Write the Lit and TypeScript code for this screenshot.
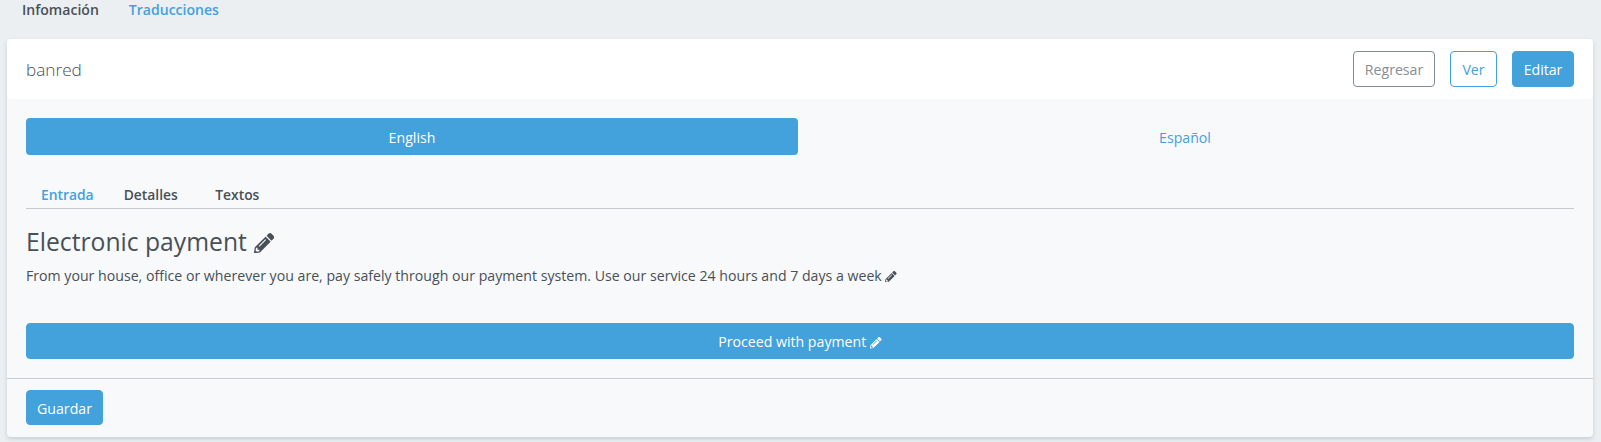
import { LitElement, html, css } from "lit";
import { customElement, state } from "lit/decorators.js";
import { classMap } from "lit/directives/class-map.js";

@customElement("edit-pencil")
class EditPencil extends LitElement {
  static styles = css`
    :host { display: inline-block; width: 0.82em; height: 0.82em; }
    svg { display: block; width: 100%; height: 100%; fill: currentColor; }
  `;
  render() {
    return html`<svg viewBox="0 0 512 512" aria-hidden="true"><path d="M497.9 142.1l-46.1 46.1c-4.7 4.7-12.3 4.7-17 0l-111-111c-4.7-4.7-4.7-12.3 0-17l46.1-46.1c18.7-18.7 49.1-18.7 67.9 0l60.1 60.1c18.8 18.7 18.8 49.1 0 67.9zM284.2 99.8L21.6 362.4.4 483.9c-2.9 16.4 11.4 30.6 27.8 27.8l121.5-21.3 262.6-262.6c4.7-4.7 4.7-12.3 0-17l-111-111c-4.8-4.7-12.4-4.7-17.1 0zM124.1 339.9c-5.5-5.5-5.5-14.3 0-19.8l154-154c5.5-5.5 14.3-5.5 19.8 0s5.5 14.3 0 19.8l-154 154c-5.5 5.5-14.3 5.5-19.8 0zM88 424h48v36.3l-64.5 11.3-31.1-31.1L51.7 376H88v48z"/></svg>`;
  }
}

@customElement("app-root")
class AppRoot extends LitElement {
  static styles = css`
    :host {
      display: block;
      height: 442px;
      overflow: hidden;
      box-sizing: border-box;
      padding: 0 8px 0 7px;
      background: #ebeff2;
      color: #495057;
      font: 14.15px/22px "Open Sans", "Noto Sans", sans-serif;
    }
    * { box-sizing: border-box; }
    .sections { display: flex; height: 19px; align-items: center; gap: 30px; padding-left: 15px; font-size: 14.05px; font-weight: 600; }
    .link { color: #43a1dc; }
    .card {
      margin-top: 20px;
      height: 397.5px;
      border-radius: 4px;
      background: #f7f9fb;
      box-shadow: 0 2px 4px rgba(60, 80, 95, 0.2);
    }
    .header { display: flex; align-items: center; gap: 15px; height: 60px; padding: 0 19px; background: #fff; border-radius: 4px; }
    .title { flex: 1; padding-top: 2px; font-size: 17.2px; font-weight: 300; }
    .btn {
      display: flex; align-items: center; justify-content: center;
      height: 36px; padding: 2px 11px 0;
      font: inherit; color: #fff; background: #43a1dc;
      border: 1px solid #43a1dc; border-radius: 4px;
    }
    .btn.back { width: 82px; color: #868e96; border-color: #7f8c98; background: #fff; }
    .btn.view { width: 47px; color: #43a1dc; background: #fff; }
    .btn.edit { width: 62px; }
    .body { display: flex; flex-direction: column; height: 279px; padding: 19px 19px 0; }
    .languages { display: grid; grid-template-columns: 772px 1fr; height: 37px; flex: none; }
    .language { display: flex; align-items: center; justify-content: center; padding-top: 2px; color: #43a1dc; border-radius: 4px; }
    .language.active { color: #fff; background: #43a1dc; }
    .language:not(.active) { padding-right: 2px; }
    .tabs { display: flex; align-items: center; gap: 30px; height: 28px; margin-top: 26px; padding-left: 15px; flex: none; font-size: 13.85px; font-weight: 600; border-bottom: 1px solid #c7cacd; }
    .tab.last { padding-left: 7.5px; }
    .heading { display: flex; align-items: center; gap: 7px; height: 33px; margin: 16px 0 0; font-size: 24.7px; font-weight: 400; }
    .lead { display: flex; align-items: center; gap: 3.5px; height: 23px; margin: 6px 0 0; }
    .lead edit-pencil, .btn edit-pencil { margin-top: 2px; }
    .heading edit-pencil { margin-top: 3px; }
    .btn.pay { gap: 4px; margin-top: 36px; }
    .footer { height: 58.5px; padding: 11px 19px; border-top: 1px solid #c4cbd1; }
    .btn.save { width: 77px; height: 35px; }
  `;

  @state() private language = "English";

  render() {
    return html`
      <nav class="sections"><span>Infomación</span><span class="link">Traducciones</span></nav>
      <section class="card">
        <header class="header">
          <div class="title">banred</div>
          <button class="btn back">Regresar</button>
          <button class="btn view">Ver</button>
          <button class="btn edit">Editar</button>
        </header>
        <div class="body">
          <div class="languages">
            ${["English", "Español"].map((name) => html`
              <div class=${classMap({ language: true, active: name === this.language })}
                @click=${() => (this.language = name)}>${name}</div>`)}
          </div>
          <nav class="tabs">
            <span class="tab link">Entrada</span><span class="tab">Detalles</span><span class="tab last">Textos</span>
          </nav>
          <h3 class="heading">Electronic payment<edit-pencil></edit-pencil></h3>
          <p class="lead">From your house, office or wherever you are, pay safely through our payment system. Use our service 24 hours and 7 days a week<edit-pencil></edit-pencil></p>
          <button class="btn pay">Proceed with payment<edit-pencil></edit-pencil></button>
        </div>
        <footer class="footer"><button class="btn save">Guardar</button></footer>
      </section>`;
  }
}
